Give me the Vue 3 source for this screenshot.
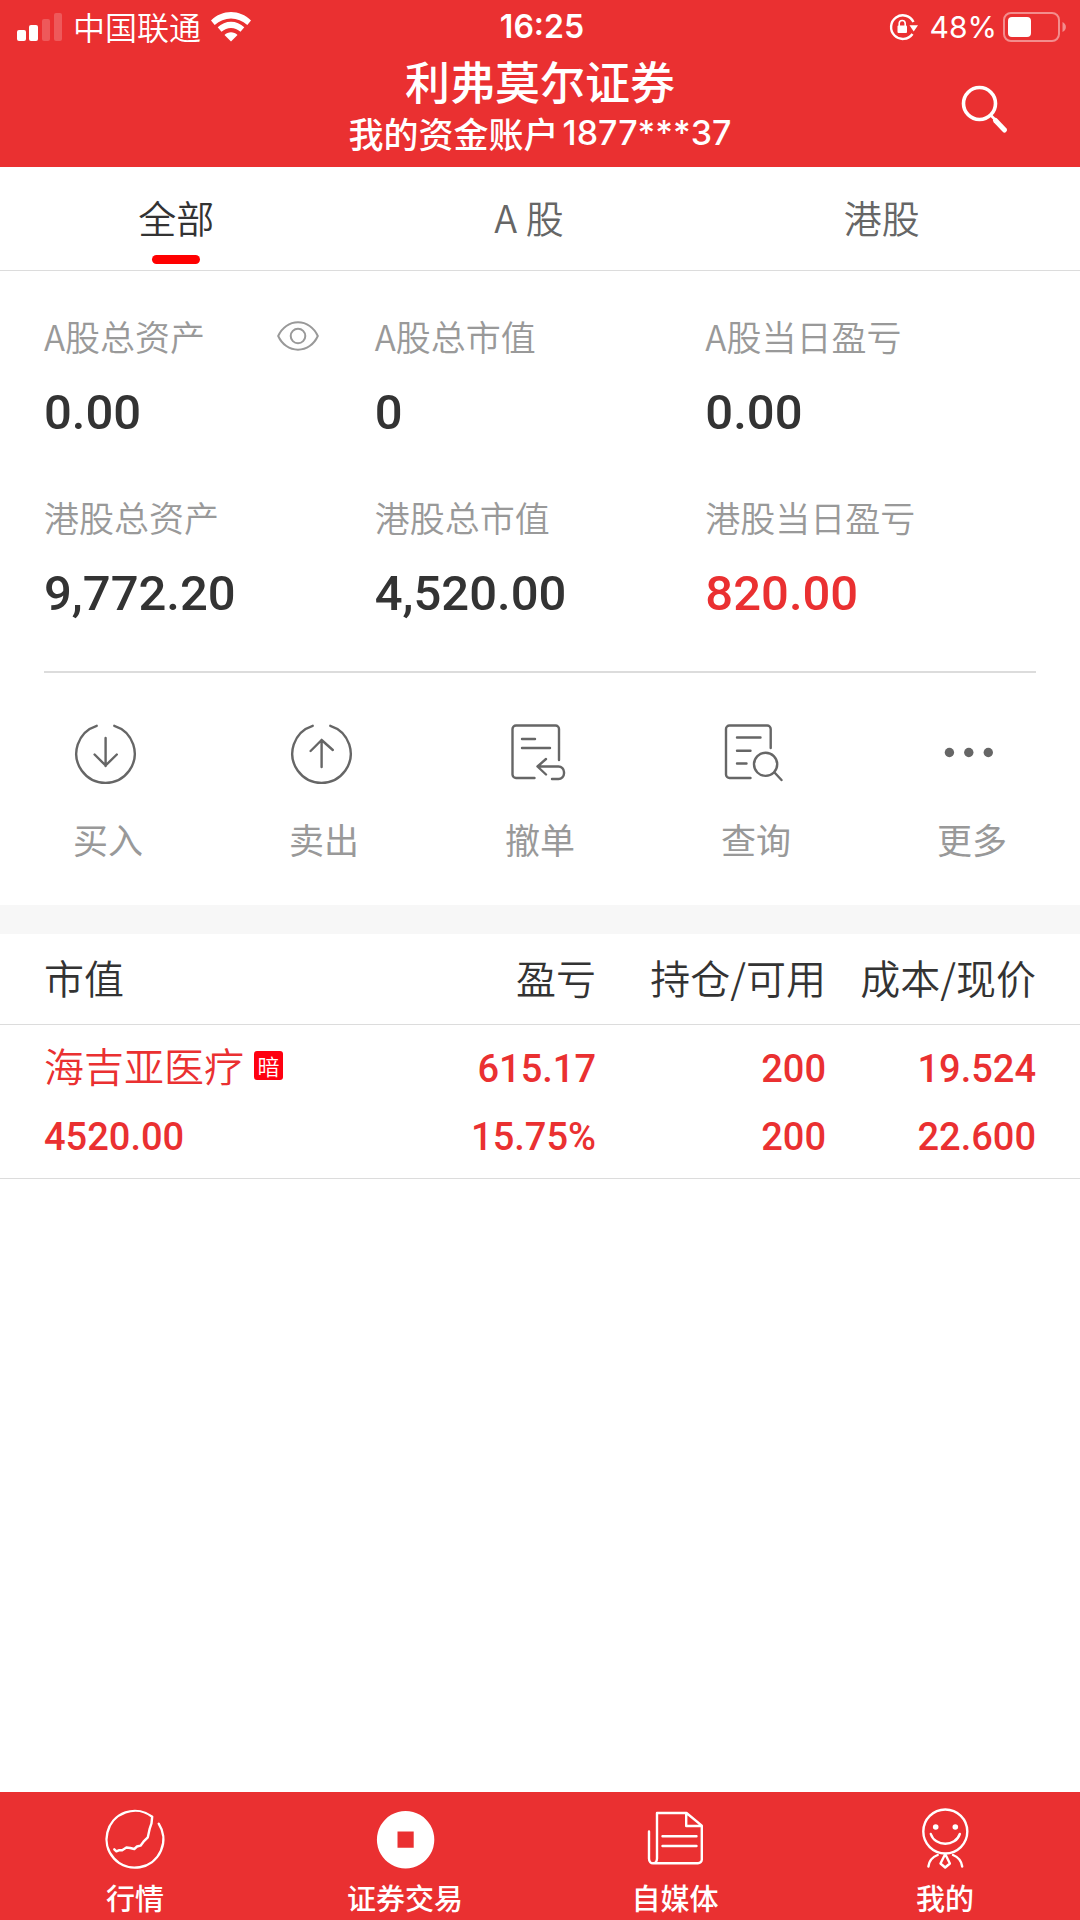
<script setup>
import { ref } from 'vue'

const tabs = ['全部', 'A 股', '港股']
const activeTab = ref(0)

const summary = [
  { label: 'A股总资产', value: '0.00', toggle: true },
  { label: 'A股总市值', value: '0' },
  { label: 'A股当日盈亏', value: '0.00' },
  { label: '港股总资产', value: '9,772.20' },
  { label: '港股总市值', value: '4,520.00' },
  { label: '港股当日盈亏', value: '820.00', up: true },
]

const holdings = [
  {
    name: '海吉亚医疗',
    tag: '暗',
    value: '4520.00',
    profit: '615.17',
    ratio: '15.75%',
    held: '200',
    available: '200',
    cost: '19.524',
    price: '22.600',
  },
]
</script>

<template>
  <div class="app">
    <header class="header">
      <div class="status">
        <div class="status-left">
          <svg class="signal" viewBox="0 0 46 30" aria-hidden="true">
            <rect x="0" y="18" width="9" height="11" rx="2" />
            <rect x="12" y="13" width="9" height="16" rx="2" />
            <rect x="25" y="7" width="8" height="22" rx="2" opacity="0.2" />
            <rect x="37" y="1" width="8" height="28" rx="2" opacity="0.2" />
          </svg>
          <span class="carrier">中国联通</span>
          <svg class="wifi" viewBox="0 0 40 30" aria-hidden="true">
            <path d="M0 8.600C11 -2.800 29 -2.800 40 8.600L36.300 13C27 4.200 13 4.200 3.700 13Z" />
            <path d="M6.700 15.300C14 7.800 26 7.800 33.300 15.300L29.500 19.800C24 14.600 16 14.600 10.500 19.800Z" />
            <path d="M13.500 23C17 19.300 23 19.300 26.500 23L20 29.500Z" />
          </svg>
        </div>
        <time class="clock">16:25</time>
        <div class="status-right">
          <svg class="lock" viewBox="0 0 29 28" aria-hidden="true">
            <path d="M24.500 9A11.800 11.800 0 1 0 23.500 21" fill="none" stroke="currentColor" stroke-width="2.400" />
            <path d="M20.500 12.300H29L24.700 18.500Z" />
            <rect x="8.500" y="12.500" width="9.500" height="7.500" rx="1" />
            <path d="M10.200 13V10.500a3 3 0 0 1 6 0V13" fill="none" stroke="currentColor" stroke-width="1.600" />
          </svg>
          <span class="percent">48%</span>
          <svg class="battery" viewBox="0 0 64 30" aria-hidden="true">
            <rect x="1" y="1" width="55" height="28" rx="7" fill="none" stroke="currentColor" stroke-width="2" opacity="0.45" />
            <rect x="5" y="5" width="23" height="20" rx="4" />
            <path d="M59.500 10C64 12 64 18 59.500 20Z" opacity="0.45" />
          </svg>
        </div>
      </div>
      <div class="title-bar">
        <div class="title-text">
          <h1 class="title">利弗莫尔证券</h1>
          <p class="account">我的资金账户<span class="account-no">1877***37</span></p>
        </div>
        <button class="search" type="button" aria-label="搜索">
          <svg viewBox="0 0 46 50" aria-hidden="true">
            <circle cx="17.500" cy="18.500" r="16" fill="none" stroke="currentColor" stroke-width="3.600" />
            <path d="M29 30.500L33 34.500" stroke="currentColor" stroke-width="2.600" />
            <path d="M33.500 35.500L42.500 45" stroke="currentColor" stroke-width="5" stroke-linecap="round" />
          </svg>
        </button>
      </div>
    </header>

    <main class="main">
      <div class="tabs" role="tablist">
        <button
          v-for="(tab, i) in tabs"
          :key="tab"
          type="button"
          role="tab"
          class="tab"
          :class="{ active: activeTab === i }"
          :aria-selected="activeTab === i"
          @click="activeTab = i"
        >
          {{ tab }}
        </button>
      </div>

      <section class="account-panel">
        <dl class="summary">
          <div v-for="item in summary" :key="item.label" class="stat">
            <dt class="stat-label">
              {{ item.label }}
              <button v-if="item.toggle" class="eye" type="button" aria-label="显示金额">
                <svg viewBox="0 0 42 30" aria-hidden="true">
                  <path d="M1.200 15C5 6.500 12.500 1.300 21 1.300S37 6.500 40.800 15C37 23.500 29.500 28.700 21 28.700S5 23.500 1.200 15Z" />
                  <circle cx="21" cy="15" r="7.300" />
                </svg>
              </button>
            </dt>
            <dd class="stat-value" :class="{ up: item.up }">{{ item.value }}</dd>
          </div>
        </dl>
      </section>

      <div class="actions">
        <button class="action" type="button">
          <svg viewBox="0 0 60 60" aria-hidden="true">
            <path d="M18.700 1.800A29.200 29.200 0 1 0 36.300 1.800M27.600 14V42M16.600 30.500L27.600 41.500L38.800 30.500" />
          </svg>
          买入
        </button>
        <button class="action" type="button">
          <svg viewBox="0 0 60 60" aria-hidden="true">
            <path d="M18.700 1.800A29.200 29.200 0 1 0 36.300 1.800M27.600 43V16M16.600 27L27.600 16L38.800 26" />
          </svg>
          卖出
        </button>
        <button class="action" type="button">
          <svg viewBox="0 0 60 60" aria-hidden="true">
            <path d="M24.500 54H6a3.500 3.500 0 0 1 -3.500 -3.500V5a3.500 3.500 0 0 1 3.500 -3.500H45.500a3.500 3.500 0 0 1 3.500 3.500V36M12 15H25M12 24H40M36 35L27.500 42.500L36 50.500M28 42.500H48.500a5.500 5.500 0 0 1 5.500 5.500V49.500a5.500 5.500 0 0 1 -5.500 5.500H42" />
          </svg>
          撤单
        </button>
        <button class="action" type="button">
          <svg viewBox="0 0 60 60" aria-hidden="true">
            <path d="M24.500 54H3.500a3.500 3.500 0 0 1 -3.500 -3.500V5a3.500 3.500 0 0 1 3.500 -3.500H41.200a3.500 3.500 0 0 1 3.500 3.500V24M11 13.500H34.500M11 26.700H24.500M11 39.500H20.500M48.500 48.500L55.500 56" />
            <circle cx="39.600" cy="40.300" r="11.600" />
          </svg>
          查询
        </button>
        <button class="action" type="button">
          <svg viewBox="0 0 60 60" aria-hidden="true">
            <g fill="currentColor" stroke="none">
              <circle cx="7.400" cy="28.500" r="4.700" />
              <circle cx="26.800" cy="28.500" r="4.700" />
              <circle cx="46.300" cy="28.500" r="4.700" />
            </g>
          </svg>
          更多
        </button>
      </div>

      <table class="holdings">
        <colgroup>
          <col />
          <col class="col-profit" />
          <col class="col-held" />
          <col class="col-cost" />
        </colgroup>
        <thead>
          <tr>
            <th scope="col">市值</th>
            <th scope="col">盈亏</th>
            <th scope="col">持仓/可用</th>
            <th scope="col">成本/现价</th>
          </tr>
        </thead>
        <tbody>
          <tr v-for="h in holdings" :key="h.name">
            <td>
              <div class="name">{{ h.name }}<span class="tag">{{ h.tag }}</span></div>
              <div class="num">{{ h.value }}</div>
            </td>
            <td>
              <div class="num">{{ h.profit }}</div>
              <div class="num">{{ h.ratio }}</div>
            </td>
            <td>
              <div class="num">{{ h.held }}</div>
              <div class="num">{{ h.available }}</div>
            </td>
            <td>
              <div class="num">{{ h.cost }}</div>
              <div class="num">{{ h.price }}</div>
            </td>
          </tr>
        </tbody>
      </table>
    </main>

    <nav class="nav">
      <a class="nav-item" href="#market">
        <svg viewBox="0 0 60 60" aria-hidden="true">
          <path d="M53.700 14.700A28.400 28.400 0 1 1 47.200 7.700L46.500 14.300L44.800 19.300L42.800 28.300L38.500 32.700L35.500 36.700L32 37.500L29.300 40L25.200 39L21.400 38.500L17.200 41.200L13.800 41.300L11.400 42.300L9.300 40.300" />
        </svg>
        行情
      </a>
      <a class="nav-item" href="#trade" aria-current="page">
        <svg viewBox="0 0 60 60" aria-hidden="true">
          <path fill="currentColor" stroke="none" fill-rule="evenodd" d="M30.600 2a28.700 28.700 0 1 0 0.010 0ZM22.500 22.500H38.700V38.700H22.500Z" />
        </svg>
        证券交易
      </a>
      <a class="nav-item" href="#media">
        <svg viewBox="0 0 60 60" aria-hidden="true">
          <path d="M4 22.500V49.500C4 56 12 56 12 49.500V4H41.500L56.800 16.700V50.500a3.800 3.800 0 0 1 -3.800 3.800H8M41.200 4V17H56.800M17.500 27.300H51.500M17.500 37H51.500" />
        </svg>
        自媒体
      </a>
      <a class="nav-item" href="#mine">
        <svg viewBox="0 0 60 60" aria-hidden="true">
          <circle cx="30.300" cy="22.500" r="22" />
          <path d="M15.800 25C20 38 40.500 38 44.800 25M22.700 46C17.500 48 14 52 13.400 57.500M38 46C43 48 46.500 52 47.200 57.500M30.200 45L25.500 54.500L30.200 58.500L34.900 54.500Z" />
          <g fill="currentColor" stroke="none">
            <circle cx="20.700" cy="18" r="2.800" />
            <circle cx="40.300" cy="18" r="2.800" />
          </g>
        </svg>
        我的
      </a>
    </nav>
  </div>
</template>

<style>
body {
  margin: 0;
  background: #fff;
}
</style>

<style scoped>
.app {
  --red: #ea3031;
  --line: #dcdcdc;
  display: flex;
  flex-direction: column;
  min-height: 100vh;
  background: #fff;
  color: #333;
  font-family: 'Noto Sans CJK SC', sans-serif;
}

button {
  margin: 0;
  padding: 0;
  border: 0;
  background: none;
  color: inherit;
  font: inherit;
  cursor: pointer;
}

svg {
  display: block;
  fill: currentColor;
  overflow: visible;
}

.header {
  padding-bottom: 9px;
  background: var(--red);
  color: #fff;
}

.status {
  display: grid;
  grid-template-columns: 1fr auto 1fr;
  align-items: center;
  height: 54px;
  padding: 0 13px 0 17px;
}

.status-left,
.status-right {
  display: flex;
  align-items: center;
}

.status-right {
  justify-content: flex-end;
}

.signal {
  width: 46px;
  height: 30px;
}

.carrier {
  margin: 0 10px 2px;
  font-size: 32px;
  font-weight: 350;
  line-height: 44px;
}

.wifi {
  width: 40px;
  height: 30px;
}

.clock,
.percent {
  font-family: Inter, sans-serif;
  line-height: 44px;
}

.clock {
  font-size: 32px;
  font-weight: 600;
}

.percent {
  font-size: 30px;
}

.lock {
  width: 29px;
  height: 28px;
  margin-right: 12px;
}

.battery {
  width: 64px;
  height: 30px;
  margin-left: 6px;
}

.title-bar {
  display: grid;
  grid-template-columns: 1fr auto 1fr;
  align-items: center;
  padding-right: 72px;
  padding-left: 72px;
}

.title-text {
  grid-column: 2;
  text-align: center;
}

.title {
  margin: 0;
  font-size: 45px;
  font-weight: 500;
  line-height: 54px;
}

.account {
  display: flex;
  justify-content: center;
  height: 50px;
  margin: 0;
  font-size: 35px;
  font-weight: 500;
  line-height: 50px;
}

.account-no {
  margin-left: 4px;
  font-family: Inter, sans-serif;
  font-size: 34px;
}

.search {
  justify-self: end;
  margin-top: 8px;
}

.search svg {
  width: 46px;
  height: 50px;
}

.main {
  flex: 1;
}

.tabs {
  display: grid;
  grid-template-columns: repeat(3, 1fr);
  padding-right: 22px;
  border-bottom: 1px solid var(--line);
}

.tab {
  display: flex;
  flex-direction: column;
  align-items: center;
  gap: 12px;
  padding: 24px 0 6px;
  color: #666;
  font-size: 38px;
  font-weight: 350;
  line-height: 52px;
}

.tab::after {
  width: 48px;
  height: 9px;
  border-radius: 5px;
  content: '';
}

.tab.active {
  color: #333;
}

.tab.active::after {
  background: #f00;
}

.account-panel {
  padding: 0 44px;
}

.summary {
  display: grid;
  grid-template-columns: repeat(3, 1fr);
  row-gap: 52px;
  margin: 0;
  padding: 43px 0 47px;
  border-bottom: 2px solid var(--line);
}

.stat-label {
  display: flex;
  align-items: center;
  justify-content: space-between;
  padding-right: 56px;
  color: #999;
  font-size: 35px;
  font-weight: 350;
  line-height: 44px;
}

.eye svg {
  width: 42px;
  height: 30px;
  fill: none;
  stroke: currentColor;
  stroke-width: 2;
}

.stat-value {
  margin: 25px 0 0;
  font-family: Roboto, sans-serif;
  font-size: 49px;
  font-weight: 500;
  line-height: 60px;
}

.stat-value.up {
  color: var(--red);
}

.actions {
  display: grid;
  grid-template-columns: repeat(5, 1fr);
  padding: 51px 0 44px;
  border-bottom: 29px solid #f7f7f7;
}

.action {
  display: flex;
  flex-direction: column;
  align-items: center;
  gap: 33px;
  color: #999;
  font-size: 35px;
  line-height: 44px;
}

.action svg {
  width: 60px;
  height: 60px;
  color: #666;
  fill: none;
  stroke: currentColor;
  stroke-width: 2.4;
  stroke-linecap: round;
  stroke-linejoin: round;
}

.holdings {
  width: 100%;
  border-collapse: separate;
  border-spacing: 0;
  table-layout: fixed;
}

.col-profit {
  width: 194px;
}

.col-held {
  width: 230px;
}

.col-cost {
  width: 254px;
}

.holdings th,
.holdings td {
  border-bottom: 1px solid var(--line);
  text-align: right;
  white-space: nowrap;
}

.holdings th {
  padding: 17px 0 21px;
  font-size: 40px;
  font-weight: 350;
  line-height: 52px;
}

.holdings td {
  padding: 10px 0 7px;
  color: var(--red);
}

.holdings th:first-child,
.holdings td:first-child {
  padding-left: 44px;
  text-align: left;
}

.holdings th:last-child,
.holdings td:last-child {
  padding-right: 44px;
}

.name {
  display: flex;
  align-items: center;
  gap: 10px;
  padding-bottom: 8px;
  font-size: 40px;
  font-weight: 350;
  line-height: 60px;
}

.tag {
  width: 29px;
  border-radius: 3px;
  background: #ff0010;
  color: #fff;
  font-size: 22px;
  line-height: 29px;
  text-align: center;
}

.num {
  font-family: Roboto, sans-serif;
  font-size: 38px;
  font-weight: 500;
  line-height: 68px;
}

.nav {
  display: grid;
  grid-template-columns: repeat(4, 1fr);
  background: var(--red);
}

.nav-item {
  display: flex;
  flex-direction: column;
  align-items: center;
  gap: 8px;
  padding: 17px 0 3px;
  color: #fff;
  font-size: 29px;
  font-weight: 500;
  line-height: 40px;
  text-decoration: none;
}

.nav-item svg {
  width: 60px;
  height: 60px;
  fill: none;
  stroke: currentColor;
  stroke-width: 2.4;
  stroke-linecap: round;
  stroke-linejoin: round;
}
</style>
